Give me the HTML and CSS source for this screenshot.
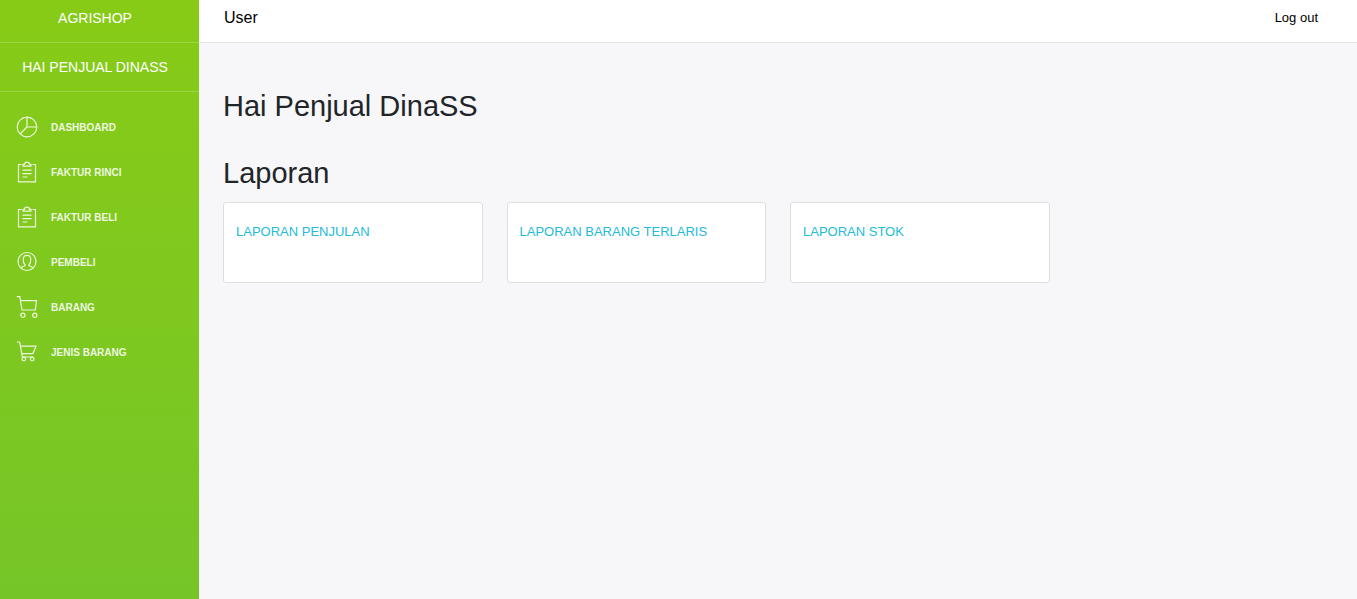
FILE: index.html
```html
<!DOCTYPE html>
<html lang="id">
<head>
<meta charset="utf-8">
<meta name="viewport" content="width=device-width, initial-scale=1">
<title>Agrishop</title>
<link rel="stylesheet" href="styles.css">
</head>
<body>
<svg class="sprite" aria-hidden="true">
  <symbol id="icon-pie" viewBox="0 0 22 22"><circle cx="11" cy="11" r="9.8"/><path d="M11 1.2V11H20.8M11 11L4 18"/></symbol>
  <symbol id="icon-note" viewBox="0 0 22 22"><path d="M5.5 3.5H2.5V20.8H19.5V3.5H16.5M7 5.2H15V3.4H13.6C13.3 .3 8.7 .3 8.4 3.4H7ZM6.5 9.2H15.5M6.5 12.6H15.5M6.5 16H11.5"/></symbol>
  <symbol id="icon-user" viewBox="0 0 22 22"><circle cx="11" cy="10.5" r="9"/><path d="M5 17C5.6 15.2 9.2 15.8 9.2 14C6.4 11.4 6.2 4.4 11 4.4S15.6 11.4 12.8 14C12.8 15.8 16.4 15.2 17 17"/></symbol>
  <symbol id="icon-cart-wide" viewBox="0 0 22 22"><path d="M.8 .7H3.8L6 14H19.3L20.6 4.6H4.5"/><circle cx="6.9" cy="19.2" r="2.1"/><circle cx="18.8" cy="19.2" r="2.1"/></symbol>
  <symbol id="icon-cart" viewBox="0 0 22 22"><path d="M.8 1H3.6L6.4 16H17M5.8 12.6H17L20 5.2H4.5"/><circle cx="7.8" cy="18" r="1.8"/><circle cx="16.2" cy="18" r="1.8"/></symbol>
</svg>
<div class="layout">
  <aside class="sidebar">
    <div class="brand"><a href="#">AGRISHOP</a></div>
    <div class="greeting"><a href="#">HAI PENJUAL DINASS</a></div>
    <nav class="menu">
      <a href="#"><svg class="icon"><use href="#icon-pie"/></svg>DASHBOARD</a>
      <a href="#"><svg class="icon"><use href="#icon-note"/></svg>FAKTUR RINCI</a>
      <a href="#"><svg class="icon"><use href="#icon-note"/></svg>FAKTUR BELI</a>
      <a href="#"><svg class="icon"><use href="#icon-user"/></svg>PEMBELI</a>
      <a href="#"><svg class="icon"><use href="#icon-cart-wide"/></svg>BARANG</a>
      <a href="#"><svg class="icon"><use href="#icon-cart"/></svg>JENIS BARANG</a>
    </nav>
  </aside>
  <div class="page">
    <header class="topbar">
      <a class="topbar-title" href="#">User</a>
      <a class="logout" href="#">Log out</a>
    </header>
    <main class="content">
      <h1>Hai Penjual DinaSS</h1>
      <h2>Laporan</h2>
      <div class="cards">
        <div class="card"><a href="#">LAPORAN PENJULAN</a></div>
        <div class="card"><a href="#">LAPORAN BARANG TERLARIS</a></div>
        <div class="card"><a href="#">LAPORAN STOK</a></div>
      </div>
    </main>
  </div>
</div>
</body>
</html>
```

FILE: styles.css
```css
* {
  box-sizing: border-box;
}

body {
  margin: 0;
  background: #f7f7f9;
  color: #212529;
  font-family: "Liberation Sans", Arial, sans-serif;
  font-size: 13px;
}

a {
  color: inherit;
  text-decoration: none;
}

.sprite {
  display: none;
}

.layout {
  display: flex;
  min-height: 100vh;
}

.sidebar {
  flex: 0 0 199px;
  background: linear-gradient(#87cb16, #76c528);
  color: #fff;
}

.brand,
.greeting {
  padding-right: 9px;
  border-bottom: 1px solid rgba(255, 255, 255, 0.2);
  font-size: 14px;
  line-height: 20px;
  text-align: center;
}

.brand {
  padding-top: 8px;
  padding-bottom: 14px;
}

.greeting {
  padding-top: 14px;
  padding-bottom: 14px;
}

.menu {
  display: flex;
  flex-direction: column;
  gap: 5px;
  padding: 15px 16px;
}

.menu a {
  display: flex;
  align-items: center;
  gap: 13px;
  height: 40px;
  font-size: 10px;
  font-weight: bold;
  opacity: 0.86;
}

.icon {
  width: 22px;
  height: 22px;
  fill: none;
  stroke: currentColor;
  stroke-width: 1.2;
}

.page {
  flex: 1;
  min-width: 0;
}

.topbar {
  display: flex;
  justify-content: space-between;
  padding: 8px 39px 14px 25px;
  border-bottom: 1px solid #e3e3e5;
  background: #fff;
  color: #000;
  line-height: 20px;
}

.topbar-title {
  font-size: 16px;
}

.content {
  padding: 46px 24px 24px;
}

h1,
h2 {
  margin: 0;
  font-size: 29px;
  font-weight: normal;
  line-height: 35px;
}

h1 {
  margin-bottom: 32px;
}

h2 {
  margin-bottom: 11px;
}

.cards {
  display: grid;
  grid-template-columns: repeat(4, 1fr);
  gap: 24px;
}

.card {
  padding: 19px 12px 40px;
  border: 1px solid #dfdfe1;
  border-radius: 3px;
  background: #fff;
  color: #23bbd8;
  line-height: 20px;
}
```
